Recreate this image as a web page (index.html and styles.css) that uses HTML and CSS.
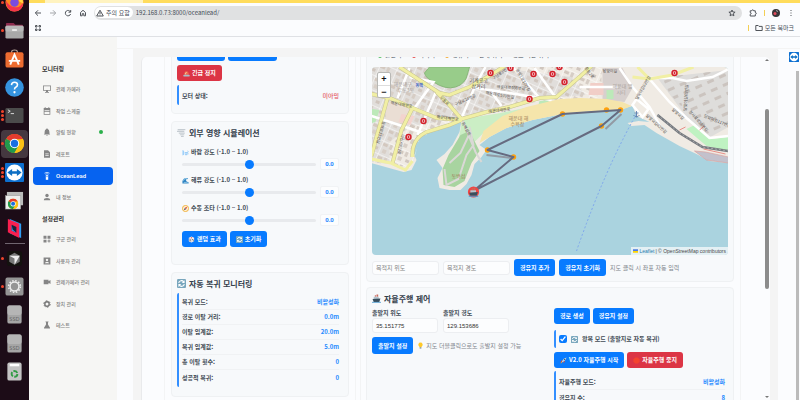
FILE: index.html
```
<!DOCTYPE html>
<html lang="ko">
<head>
<meta charset="utf-8">
<title>OceanLead</title>
<link rel="stylesheet" href="styles.css">
</head>
<body>
<svg class="defs" aria-hidden="true">
  <symbol id="chrome" viewBox="0 0 20 20"><circle cx="10" cy="10" r="10" fill="#fbc116"/><path d="M10 10L1.3 5A10 10 0 0 1 18.7 5z" fill="#e33b2e"/><path d="M1.3 5A10 10 0 0 0 10 20L14.3 12.5 10 10z" fill="#229a4c"/><path d="M10 5.5h9A10 10 0 0 1 10 20l4-7.5z" fill="#fbc116"/><circle cx="10" cy="10" r="5" fill="#fff"/><circle cx="10" cy="10" r="3.9" fill="#1a6fe0"/></symbol>
  <symbol id="viewer" viewBox="0 0 20 20"><rect width="20" height="20" rx="1" fill="#0d6fd0"/><circle cx="10" cy="10" r="8.5" fill="#fff"/><path d="M2.5 10l5-3.8v2.5h5V6.2l5 3.8-5 3.8v-2.5h-5v2.5z" fill="#0d6fc4"/></symbol>
  <symbol id="ssd" viewBox="0 0 16 20"><rect x=".5" y=".5" width="15" height="19" rx="2" fill="#a5a5a5"/><rect x=".5" y=".5" width="15" height="10" rx="2" fill="#b5b5b5"/><text x="8" y="16.5" font-size="6" text-anchor="middle" fill="#666" font-family="Open Sans, sans-serif">SSD</text></symbol>
  <symbol id="refresh" viewBox="0 0 16 16"><rect width="16" height="16" rx="2" fill="#78a6bd"/><path d="M3 7a5 5 0 0 1 9-2M13 9a5 5 0 0 1-9 2" fill="none" stroke="#fff" stroke-width="2"/><path d="M13.5 2v5h-5zM2.500 14V9h5z" fill="#fff"/></symbol>
  <symbol id="siren" viewBox="0 0 16 16"><path d="M3 11V8a5 5 0 0 1 10 0v3z" fill="#f06a50"/><path d="M6 10V7l2-2" stroke="#ffe1a0" stroke-width="2" fill="none"/><rect x="1" y="11" width="14" height="4" rx="1" fill="#a9bdc8"/></symbol>
  <symbol id="tornado" viewBox="0 0 16 16"><path d="M2 3h12M1 6h11M4 9h9M6 12h6M8 15h3" stroke="#c5ccd2" stroke-width="2.200" stroke-linecap="round"/></symbol>
  <symbol id="wind" viewBox="0 0 16 16"><path d="M1 2q5 1 4 5l1 2-1 1v3l-4 2z" fill="#9ed0fa"/><path d="M7 8h6q2-3 0-4M7 11h8M7 13h5" fill="none" stroke="#78bdf5" stroke-width="1.700"/></symbol>
  <symbol id="wave" viewBox="0 0 16 16"><path d="M1 15V9q2-7 9-7 4 0 4 3-4-2-5 2 0 4 6 5v3z" fill="#3186c4"/><path d="M2 9q3-6 9-6M4 13q5-1 10 1" fill="none" stroke="#b8e2f5" stroke-width="1.500"/></symbol>
  <symbol id="compass" viewBox="0 0 16 16"><circle cx="8" cy="8" r="7" fill="#fff2d5" stroke="#efa92b" stroke-width="2"/><path d="M12 4L9.500 9.500 6.500 6.500z" fill="#e54335"/><path d="M4 12l2.500-5.500 3 3z" fill="#556"/></symbol>
  <symbol id="dice" viewBox="0 0 16 16"><path d="M8 1l6 3v8l-6 3-6-3V4z" fill="#f4eeee"/><path d="M2 4l6 3v8l-6-3z" fill="#cfc9cd"/><circle cx="8" cy="4" r="1.400" fill="#d33"/><circle cx="5" cy="9" r="1.200" fill="#333"/><circle cx="11" cy="8" r="1.200" fill="#333"/><circle cx="12" cy="11" r="1.200" fill="#333"/></symbol>
  <symbol id="ship" viewBox="0 0 16 16"><path d="M5 2h2v3H5zM8 1h3v4H8z" fill="#c96a5c"/><path d="M3 5h9v4H3z" fill="#b4c6d1"/><path d="M1 9l14-1-2 6H3z" fill="#394f5e"/><path d="M0 14h16v1.500H0z" fill="#4a9ad0"/></symbol>
  <symbol id="bulb" viewBox="0 0 16 16"><path d="M8 1a5 5 0 0 0-3 9l1 2h4l1-2a5 5 0 0 0-3-9z" fill="#ffc928"/><path d="M6 12h4v3H6z" fill="#7d8c94"/></symbol>
  <symbol id="rocket" viewBox="0 0 16 16"><path d="M3 8h3l-2 4-3 1zM8 10v4l3-3V8z" fill="#d9483c"/><path d="M4 10Q8 2 15 1q-1 7-9 11z" fill="#c8d5dc"/><circle cx="10.500" cy="5.500" r="1.600" fill="#35657c"/><path d="M4 11l-3 4 4-2z" fill="#ffb52a"/></symbol>
  <symbol id="stop" viewBox="0 0 16 16"><path d="M5 1h6l4 4v6l-4 4H5l-4-4V5z" fill="#f4442e"/></symbol>
  <symbol id="cross" viewBox="-4 -4 8 8"><circle r="3.200" fill="#d31f2a"/><circle r="1.700" fill="#fff"/><path d="M-1.300 0h2.600M0-1.300v2.600" stroke="#d31f2a" stroke-width=".9"/></symbol>
</svg>

<div class="desktop">
  <nav class="dock" aria-label="Dock">
    <div class="dock-main">
      <button class="app run" aria-label="Firefox"><svg viewBox="0 0 20 20"><circle cx="10" cy="10" r="9.500" fill="#ff8b22"/><path d="M1 8Q1 19 10 19.500 19 19 19.500 9q-3 7-9 6-6 0-9.500-7z" fill="#f5344d"/><path d="M14 2q5 3 5 9l-4-2z" fill="#ffd53d"/><circle cx="10" cy="10" r="4.500" fill="#7a4ce0"/></svg></button>
      <button class="app run" aria-label="파일"><svg viewBox="0 0 20 20"><path d="M1 3q0-1 1-1h7l2 2h7q1 0 1 1v7H1z" fill="#8e2b4e"/><rect x=".5" y="5" width="19" height="13.500" rx="1.500" fill="#a8a8a8"/><rect x=".5" y="5" width="19" height="6" rx="1.500" fill="#b8b8b8"/><path d="M7.500 9.500h5" stroke="#fff" stroke-width="1.400"/></svg></button>
      <button class="app" aria-label="소프트웨어"><svg viewBox="0 0 20 20"><path d="M7 5V3q0-2 3-2t3 2v2" fill="none" stroke="#b9a79c" stroke-width="1.200"/><rect x=".5" y="3.500" width="19" height="16" rx="2" fill="#ed6c31"/><path d="M5.500 16.500L10 6l4.500 10.500M4 12.500h12" fill="none" stroke="#fff" stroke-width="2"/></svg></button>
      <button class="app" aria-label="도움말"><svg viewBox="0 0 20 20"><circle cx="10" cy="10" r="9.800" fill="#3593df"/><path d="M6.800 7.500Q7 4.500 10 4.500t3.200 2.700Q13.200 9 11 10q-1 .6-1 2.200" fill="none" stroke="#fff" stroke-width="1.600"/><circle cx="10" cy="15" r="1.200" fill="#fff"/></svg></button>
      <button class="app run many" aria-label="터미널"><svg viewBox="0 0 20 20"><rect x=".5" y="2" width="19" height="16" rx="1.500" fill="#4b4b4b"/><path d="M3 4l2.500 1.500L3 7M6 8h3.500" fill="none" stroke="#ddd"/></svg></button>
      <button class="app run active" aria-label="Chrome"><svg viewBox="0 0 20 20"><use href="#chrome"/></svg></button>
      <button class="app run many" aria-label="TeamViewer"><svg viewBox="0 0 20 20"><use href="#viewer"/></svg></button>
      <button class="app" aria-label="Chrome 앱"><svg viewBox="0 0 20 20"><rect x="2" y="1" width="17" height="14" fill="#bbb"/><rect x=".5" y="5" width="16" height="14" fill="#eee" stroke="#999" stroke-width=".5"/><use href="#chrome" x="3" y="8" width="11" height="11"/></svg></button>
      <button class="app" aria-label="Parsec"><svg viewBox="0 0 20 20"><path d="M5 0l12 5v15L5 15z" fill="#2f9df4"/><path d="M3 0l12 5v15L3 14z" fill="#f91f4f"/><path d="M7 6l5 2.500v6L7 12z" fill="#18213a"/><path d="M7 6l1 5 4 3.500L7 12z" fill="#2f9df4"/></svg></button>
    </div>
    <hr>
    <div class="dock-extra">
      <button class="app run" aria-label="Cursor"><svg viewBox="0 0 20 20"><rect x="2" y="2" width="16" height="16" rx="3" fill="#14120f"/><path d="M10 4l5.500 3v6.500L10 16.500l-5.500-3V7z" fill="#777"/><path d="M4.500 7h11L10 16.500V10z" fill="#eee"/></svg></button>
      <button class="app run" aria-label="설정"><svg viewBox="0 0 20 20"><rect x=".5" y=".5" width="19" height="19" rx="2" fill="#959595"/><circle cx="10" cy="10" r="4.700" fill="none" stroke="#eee" stroke-width="1.600"/><circle cx="10" cy="10" r="6.200" fill="none" stroke="#eee" stroke-width="1.600" stroke-dasharray="1.620 1.620"/></svg></button>
      <button class="app" aria-label="SSD 1"><svg viewBox="0 0 16 20"><use href="#ssd"/></svg></button>
      <button class="app" aria-label="SSD 2"><svg viewBox="0 0 16 20"><use href="#ssd"/></svg></button>
      <button class="app" aria-label="휴지통"><svg viewBox="0 0 16 20"><rect x=".5" y=".5" width="15" height="19" rx="2" fill="#c4c4c4"/><path d="M3 2h10v2.500H3z" fill="#fff"/><circle cx="8" cy="12.500" r="3" fill="none" stroke="#329c45" stroke-width="2" stroke-dasharray="4.900 1.380"/></svg></button>
    </div>
  </nav>

  <div class="browser">
    <div class="tabstrip"><span class="tab"></span></div>
    <div class="toolbar">
      <button class="tool" aria-label="뒤로"><svg viewBox="0 0 8 8"><path d="M7 4H1.500M4 1.300L1.300 4 4 6.700"/></svg></button>
      <button class="tool dim" aria-label="앞으로"><svg viewBox="0 0 8 8"><path d="M1 4h5.500M4 1.300L6.700 4 4 6.700"/></svg></button>
      <button class="tool" aria-label="새로고침"><svg viewBox="0 0 8 8"><path d="M6.500 3A2.700 2.700 0 1 0 6.600 5M6.700 1v2.200H4.500"/></svg></button>
      <button class="tool" aria-label="홈"><svg viewBox="0 0 8 8"><path d="M1.500 3.500L4 1.300l2.500 2.200v3.300h-1.700V4.700H3.200v2.100H1.500z"/></svg></button>
      <div class="omnibox">
        <button class="warn"><svg viewBox="0 0 8 8"><path d="M4 1.200L7.300 7H.7zM4 3v2M4 5.600v.7"/></svg>주의 요함</button>
        <label class="url"><input type="text" aria-label="주소" value="192.168.0.73:8000/oceanlead/"></label>
        <button class="tool" aria-label="북마크 추가"><svg viewBox="0 0 8 8"><path d="M4 1l.9 2 2.200.2-1.700 1.400.5 2.200L4 5.700 2.100 6.800l.5-2.200L.9 3.200 3.100 3z"/></svg></button>
      </div>
      <button class="tool" aria-label="확장 프로그램"><svg viewBox="0 0 8 8"><path d="M1.200 1.800h1.500q.2-1 1-1t1 1h1.600v1.700q1 .1 1 .9t-1 .9V7H1.200V5.300q1-.1 1-.9t-1-.9z"/></svg></button>
      <span class="tick"></span>
      <button class="tool" aria-label="프로필"><svg viewBox="0 0 8 8"><circle cx="4" cy="4" r="4" fill="#39363a" stroke="none"/><circle cx="3" cy="4.500" r="1.500" fill="#e24b5c" stroke="none"/><path d="M4 1.500l2 1" stroke="#aaa"/></svg></button>
      <button class="tool" aria-label="메뉴"><svg viewBox="0 0 8 8"><path d="M4 1v1M4 3.500v1M4 6v1"/></svg></button>
    </div>
    <div class="bookmarks">
      <button class="tool" aria-label="앱"><svg viewBox="0 0 8 8"><path d="M1.500 1.500h1.500v1.500H1.500zM5 1.500h1.500v1.500H5zM1.500 5h1.500v1.500H1.500zM5 5h1.500v1.500H5z"/></svg></button>
      <span class="tick push"></span>
      <button class="all"><svg viewBox="0 0 8 8"><path d="M.8 1.500h2.400l.8.900h3.200v4.100H.8z"/></svg>모든 북마크</button>
    </div>

    <div class="app-page">
      <aside class="sidebar">
        <h2>모니터링</h2>
        <ul class="six">
          <li><a href="#"><svg viewBox="0 0 8 8"><path d="M0 .5h8v5.300H5V7h1v.7H2V7h1V5.800H0zm.8.800V5h6.400V1.300z" fill-rule="evenodd"/></svg>관제 카메라</a></li>
          <li><a href="#"><svg viewBox="0 0 8 8"><path d="M.7 1h1V.2h1V1h2.600V.2h1V1h1v6.800H.7zm.8 2v.7h5V3zm0 1.700V7h5V4.700z" fill-rule="evenodd"/></svg>작업 스케줄</a></li>
          <li><a href="#"><svg viewBox="0 0 8 8"><path d="M4 .3q.5 0 .6.700Q6.400 1.500 6.400 4v1.500l.8.900H.8l.8-.9V4Q1.600 1.500 3.400 1q.1-.7.6-.7zM3.200 6.900h1.600q-.1.800-.8.800t-.8-.8z"/></svg>알림 현황<i class="dot"></i></a></li>
          <li><a href="#"><svg viewBox="0 0 8 8"><path d="M1 .3h4l2 2v5.400H1zM2.300 3.500v.7h3.400v-.7zm0 1.700v.7h3.400v-.7z" fill-rule="evenodd"/></svg>레포트</a></li>
          <li><a href="#" class="current"><svg viewBox="0 0 8 8"><path d="M2.800 3.200h2.400v4.600H2.800z"/><path d="M2.500 2.300q1.500-1.200 3 0M1.500 1.200q2.500-1.800 5 0" fill="none" stroke="#fff" stroke-width=".7"/><circle cx="4" cy="4.600" r=".6" fill="#0663f0"/></svg>OceanLead</a></li>
          <li><a href="#"><svg viewBox="0 0 8 8"><circle cx="4" cy="2.500" r="1.700"/><path d="M.8 7.200Q.8 5 4 5t3.200 2.200z"/></svg>내 정보</a></li>
        </ul>
        <h2>설정관리</h2>
        <ul class="five">
          <li><a href="#"><svg viewBox="0 0 8 8"><path d="M.5.800h3v3h-3zM4.500.800h3v3h-3zM.5 4.800h3v2.700h-3zM5.500 4.500h1v1h1v1h-1v1h-1v-1h-1v-1h1z"/></svg>구군 관리</a></li>
          <li><a href="#"><svg viewBox="0 0 8 8"><path d="M.6.600h6.800v6.800H.6zM4 1.700a1.200 1.200 0 1 0 .01 0zM1.800 6.300h4.400Q5.700 4.800 4 4.800T1.800 6.300z" fill-rule="evenodd"/></svg>사용자 관리</a></li>
          <li><a href="#"><svg viewBox="0 0 8 8"><path d="M.7 1.800h4.800v1.500l2-1.300v4l-2-1.300v1.500H.7z"/></svg>관제카메라 관리</a></li>
          <li><a href="#"><svg viewBox="0 0 8 8"><circle cx="4" cy="4" r="2.200" fill="none" stroke="#777" stroke-width="1.400"/><circle cx="4" cy="4" r="3.200" fill="none" stroke="#777" stroke-width="1" stroke-dasharray="1.700 1.650"/></svg>장치 관리</a></li>
          <li><a href="#"><svg viewBox="0 0 8 8"><path d="M2.500.5h3v.8H5v2.200l2 3.200v.8H1v-.8l2-3.200V1.300h-.5z"/></svg>테스트</a></li>
        </ul>
      </aside>

      <div class="workspace">
        <header class="topbar"></header>
        <div class="stage">
          <div class="blank left"></div>
          <div class="frame">
            <main class="panel">
              <div class="content">
                <div class="column">
                  <section class="card motor">
                    <div class="buttons"><button class="btn">모터 아밍 시작</button><button class="btn">모터 아밍 해제</button></div>
                    <div class="buttons"><button class="btn red"><svg><use href="#siren"/></svg>긴급 정지</button></div>
                    <dl class="status one"><div><dt>모터 상태:</dt><dd class="off">미아밍</dd></div></dl>
                  </section>
                  <section class="card sim">
                    <h3><svg><use href="#tornado"/></svg>외부 영향 시뮬레이션</h3>
                    <div class="sliders">
                      <div class="slider"><label for="wind-level"><svg><use href="#wind"/></svg>바람 강도 (-1.0 ~ 1.0)</label><div><input id="wind-level" type="range" min="-1" max="1" step="0.1" value="0"><output>0.0</output></div></div>
                      <div class="slider"><label for="tide-level"><svg><use href="#wave"/></svg>해류 강도 (-1.0 ~ 1.0)</label><div><input id="tide-level" type="range" min="-1" max="1" step="0.1" value="0"><output>0.0</output></div></div>
                      <div class="slider"><label for="helm-level"><svg><use href="#compass"/></svg>수동 조타 (-1.0 ~ 1.0)</label><div><input id="helm-level" type="range" min="-1" max="1" step="0.1" value="0"><output>0.0</output></div></div>
                      <div class="buttons"><button class="btn"><svg><use href="#dice"/></svg>랜덤 효과</button><button class="btn"><svg><use href="#refresh"/></svg>초기화</button></div>
                    </div>
                  </section>
                  <section class="card monitor">
                    <h3><svg><use href="#refresh"/></svg>자동 복귀 모니터링</h3>
                    <dl class="status">
                      <div><dt>복귀 모드:</dt><dd>비활성화</dd></div>
                      <div><dt>경로 이탈 거리:</dt><dd>0.0m</dd></div>
                      <div><dt>이탈 임계값:</dt><dd>20.0m</dd></div>
                      <div><dt>복귀 임계값:</dt><dd>5.0m</dd></div>
                      <div><dt>총 이탈 횟수:</dt><dd>0</dd></div>
                      <div><dt>성공적 복귀:</dt><dd>0</dd></div>
                    </dl>
                  </section>
                </div>

                <div class="column wide">
                  <section class="card map-card">
                    <div class="legend"><span><i class="g"></i>출발지</span><span><i class="r"></i>목적지</span><span><i class="o"></i>경유지</span><span>현재 위치</span><span>경로 이탈 위치</span></div>
                    <div class="map">
                      <svg viewBox="372 67 357 188" preserveAspectRatio="xMidYMid slice" role="img" aria-label="해운대 지도">
                        <defs>
                          <pattern id="blocks" width="17" height="14" patternUnits="userSpaceOnUse" patternTransform="rotate(24)"><rect x="1" y="2" width="5" height="3" fill="#d3c8bf"/><rect x="8" y="1" width="3" height="5" fill="#d6cdc5"/><rect x="3" y="8" width="4" height="4" fill="#d8cfc7"/><rect x="11" y="8" width="4" height="3" fill="#d0c6be"/><path d="M0 0h17M0 0v14" stroke="#fff" stroke-width="1"/></pattern>
                          <pattern id="flats" width="13" height="9" patternUnits="userSpaceOnUse" patternTransform="rotate(-24)"><rect x="2" y="2" width="7" height="3" fill="#cbc4bf"/></pattern>
                          <path id="shore" d="M372 67H729V163L710 161 697 154 680 146 657 133 645 125 632 126 628 123 639 121 650 122 637 116 633 106 622 109 607 109 580 112 563 114 533 120 507 128 490 137 480 145 487 150 482 157 475 164 472 175 467 184 461 190 450 190 440 188 438 178 443 168 437 160 445 154 453 145 460 132 462 120 447 127 428 132 416 139 413 151 417 160 412 170 404 172 372 163Z"/>
                        </defs>
                        <path d="M372 67H729V255H372z" fill="#aad3df"/>
                        <use href="#shore" fill="#f0ebe4"/>
                        <path d="M372 67h120l80 10 14 18-70 6-54 17-50 8-22 16v22l-18-2z" fill="#e1dedb"/>
                        <path d="M372 67h230v31l-95 6-45 16-40 12-10 36-40-6z" fill="url(#blocks)"/>
                        <path d="M603 68h20l10 20-8 14-22-2z" fill="#d7d0ce"/>
                        <path d="M658 78l71-8v57l-18 10-24-20z" fill="#dedddb"/><path d="M655 78l74-8v57l-18 10z" fill="url(#flats)"/>
                        <path d="M387 103l18-3 6 10-7 14-18-4z" fill="#eaded4"/><path d="M402 114l13 2-4 9-12-3z" fill="#f3d3ce"/>
                        <path d="M591 83h13v12h-15z" fill="#f1cec7"/>
                        <path d="M430 67h40l-2 7q-2 10-12 13-10 3-22-5-8-4-9-9z" fill="#98cc8a" stroke="#88b77a"/>
                        <path d="M463 119l38-6 34-7-26 13-25 14-8 8-18 4z" fill="#cbeec5"/>
                        <path d="M372 109l8 1-4 12-4 1zM540 101l10-1-4 7-8 1zM607 90h7v9h-7z" fill="#bce9b9"/>
                        <path d="M461 135l9-4 10 20-8 12-7 18-10 6-11-2-1-16 6-14z" fill="#a8d4a0"/>
                        <path d="M687 129l8-4 17 14 17-2v14l-22-5z" fill="#bff2c2"/>
                        <path d="M480 143l4-12 19-15 24-9 33-8 20-1 27 1 16 3 9 4-10 4-42 2-17 2-30 6-26 8-17 9z" fill="#f5e5ab"/>
                        <path d="M445 169l2 16 12-6 8-24 7-10-4-18M450 163l11-10 8-17M463 120l13 32 6 10" fill="none" stroke="#dad8d6" stroke-width="2"/>
                        <g fill="none" stroke="#fff" stroke-width="2.500"><path d="M410 68l-12 30M372 116l55 18M436 93l-18 42M410 77l24 5-19 26M462 118l15-35 9-16M492 92l10 14M514 68l26 30M535 68l20 28M470 87l40 6 42 7M580 87h38M620 68l13 19 17 20 10 18M650 79l20 23 17 16 23 20 19-2M651 78l22 0 14 3 26-4 16-8M633 105l10 12 6-8-12-10z"/></g>
                        <g fill="none" stroke="#c7c491" stroke-width="4"><path d="M400 67l20 13 20 13 10 2 20-8 23-13 12-8M437 92l11 11 14 16 25-7 23-5 30-9 17-1 23-20 12-11M372 94l18 4 23 10 24 10 25 2-12 5-23 7q-15 7-14 25M388 98l-11 39-5 19M413 108l-11 22-9 33"/></g>
                        <g fill="none" stroke="#f1efa4" stroke-width="3"><path d="M400 67l20 13 20 13 10 2 20-8 23-13 12-8M437 92l11 11 14 16 25-7 23-5 30-9 17-1 23-20 12-11M372 94l18 4 23 10 24 10 25 2-12 5-23 7q-15 7-14 25M388 98l-11 39-5 19M413 108l-11 22-9 33M372 159l19 4 15 7 7-9M633 77l17 2 23-4 21-8M638 67l12 12"/></g>
                        <path d="M658 115l22 18 23 14 26 4" fill="none" stroke="#777b80" stroke-width="2.500"/><path d="M658 115l22 18 23 14 26 4" fill="none" stroke="#a5a8ab" stroke-width="1" stroke-dasharray="2 2"/>
                        <path d="M695 151l11 1 23 5v6l-22-3z" fill="#c3c1cc" stroke="#d9a3a0" stroke-width=".7"/><path d="M680 130l6-3M700 130l5-4M704 149l22 5" stroke="#e88f88"/>
                        <path d="M637 114Q606 168 577 251" fill="none" stroke="#7fa6ec" stroke-width="1" stroke-dasharray="2 2"/>
                        <path d="M637 111v6M635 113h4M634 115q3 4 6 0" fill="none" stroke="#5376a8" stroke-width=".8"/>
                        <g class="road-names">
                          <text transform="translate(391 104) rotate(10)">해운대해변로</text><text transform="translate(437 118) rotate(8)">해운대해변로</text><text transform="translate(489 113) rotate(-7)">해운대해변로</text><text transform="translate(383 121) rotate(106)">동백로27번길</text><text transform="translate(402 134) rotate(102)">마린시티1로</text><text transform="translate(440 98) rotate(42)">우동로</text><text transform="translate(486 94) rotate(10)">해운대로570번길</text><text transform="translate(497 88) rotate(4)">해운대로608번길</text><text transform="translate(456 106) rotate(-25)">구남로24번길</text><text transform="translate(516 70) rotate(60)">중동1로37번길</text><text transform="translate(494 80) rotate(-35)">구남로8번길</text><text transform="translate(585 68) rotate(55)">중동2로</text><text transform="translate(603 72) rotate(2)">달맞이길</text><text transform="translate(638 100) rotate(-60)">달맞이길62번길</text><text transform="translate(646 116) rotate(42)">달맞이길62번길</text><text transform="translate(672 110) rotate(42)">달맞이길</text><text transform="translate(687 111) rotate(-86)">달맞이길65번길</text><text transform="translate(689 112) rotate(48)">청사포로58번길</text><text transform="translate(704 117) rotate(22)">달맞이길117번길</text><text transform="translate(462 123) rotate(62)">동백섬로</text>
                          <text class="faint" x="394" y="86">해운대구</text><text class="faint" x="398" y="92">우동3동</text><text class="blue" x="416" y="87">동백</text><text class="dark" x="470" y="82">기계공고</text><text class="dark" x="472" y="88">삼거리</text><text class="brown" x="509" y="120">해운대 해</text><text class="brown" x="511" y="126">수욕장</text><text class="faint" x="613" y="88">해운대 엘</text><text class="faint" x="617" y="94">시티</text><text class="brown" x="452" y="178">동백섬</text>
                        </g>
                        <path d="M487 155l25 3M606 129l16-15" stroke="#929aa4" stroke-width="2"/>
                        <g fill="#ffa10c"><circle cx="488" cy="150" r="2.700"/><circle cx="514" cy="157" r="2.700"/><circle cx="563" cy="114" r="2.700"/><circle cx="607" cy="110" r="2.700"/><circle cx="621" cy="110" r="2.700"/><circle cx="602" cy="126" r="2.700"/></g>
                        <path d="M474 191l40-34-26-7 75-36 58-4-19 16z" fill="none" stroke="#666b80" stroke-width="2" stroke-linejoin="round"/>
                        <g><use href="#cross" x="487" y="69" width="8" height="8"/><use href="#cross" x="507" y="64" width="8" height="8"/><use href="#cross" x="530" y="70" width="8" height="8"/><use href="#cross" x="549" y="70" width="8" height="8"/><use href="#cross" x="556" y="63" width="8" height="8"/><use href="#cross" x="561" y="78" width="8" height="8"/><use href="#cross" x="526" y="95" width="8" height="8"/><use href="#cross" x="420" y="117" width="8" height="8"/><use href="#cross" x="405" y="133" width="8" height="8"/><use href="#cross" x="671" y="69" width="8" height="8"/></g>
                        <circle cx="474" cy="192" r="5.600" fill="#ef4444"/><use href="#ship" x="469" y="187" width="10" height="10"/>
                      </svg>
                      <div class="zoom"><button aria-label="확대">+</button><button aria-label="축소">−</button></div>
                      <p class="credit"><svg viewBox="0 0 6 4"><path d="M0 0h6v2H0z" fill="#4c7be1"/><path d="M0 2h6v2H0z" fill="#ffd500"/></svg><a href="#">Leaflet</a> | © OpenStreetMap contributors</p>
                    </div>
                    <div class="form-row">
                      <input class="field" type="text" placeholder="목적지 위도" aria-label="목적지 위도"><input class="field" type="text" placeholder="목적지 경도" aria-label="목적지 경도">
                      <button class="btn tall">경유지 추가</button><button class="btn tall">경유지 초기화</button><span class="hint">지도 클릭 시 좌표 자동 입력</span>
                    </div>
                  </section>
                  <section class="card drive">
                    <h3><svg><use href="#ship"/></svg>자율주행 제어</h3>
                    <div class="halves">
                      <div>
                        <div class="pair"><label>출발지 위도<input class="field" type="text" value="35.151775"></label><label>출발지 경도<input class="field" type="text" value="129.153686"></label></div>
                        <div class="start"><button class="btn tall">출발지 설정</button><span class="hint"><svg><use href="#bulb"/></svg>지도 더블클릭으로도 출발지 설정 가능</span></div>
                      </div>
                      <div>
                        <div class="buttons"><button class="btn">경로 생성</button><button class="btn">경유지 설정</button></div>
                        <label class="round"><input type="checkbox" checked><svg><use href="#refresh"/></svg>왕복 모드 (출발지로 자동 복귀)</label>
                        <div class="buttons"><button class="btn"><svg><use href="#rocket"/></svg>V2.0 자율주행 시작</button><button class="btn red"><svg><use href="#stop"/></svg>자율주행 중지</button></div>
                        <dl class="status drive-status"><div><dt>자율주행 모드:</dt><dd>비활성화</dd></div><div><dt>경유지 수:</dt><dd>8</dd></div></dl>
                      </div>
                    </div>
                  </section>
                </div>
              </div>
              <span class="thumb"></span><span class="arrow up"></span><span class="arrow down"></span>
            </main>
          </div>
          <div class="blank right"><svg class="remote" viewBox="0 0 20 20"><use href="#viewer"/></svg><span class="page-thumb"></span></div>
        </div>
      </div>
    </div>
  </div>
</div>
</body>
</html>
```
FILE: styles.css
```
* { box-sizing: border-box; }
body { margin: 0; color: #414a54; font: 6px/10px "Noto Sans CJK KR", "Noto Sans", sans-serif; }
button, input { margin: 0; padding: 0; border: 0; background: none; color: inherit; font: inherit; }
h2, h3, ul, dl, dd, p { margin: 0; padding: 0; }
ul { list-style: none; }
a { color: inherit; text-decoration: none; }
svg { display: block; flex: none; }
.defs { position: absolute; width: 0; height: 0; }
.desktop { display: flex; height: 100vh; overflow: hidden; }

/* Dock */
.dock { flex: none; width: 29px; background: #1c0c17; overflow: hidden; }
.dock-main, .dock-extra { display: grid; grid-auto-rows: 1fr; }
.dock-main { height: 255px; margin-top: -12px; }
.dock-extra { height: 142px; }
.dock hr { width: 20px; height: 1px; margin: 0 auto; border: 0; background: #706570; }
.app { position: relative; display: grid; place-items: center; width: 27px; margin: 0 1px; border-radius: 4px; }
.app svg { width: 19px; height: 19px; }
.app.active { background: #453840; }
.run::before { content: ""; position: absolute; left: 0; width: 3px; height: 3px; border-radius: 50%; background: #f0452b; }
.many::before { box-shadow: 0 -4px #f0452b, 0 4px #f0452b; }

/* Browser chrome */
.browser { flex: 1; min-width: 0; display: flex; flex-direction: column; background: #fbfcfe; }
.tabstrip { height: 3px; flex: none; background: #ffdc5c; }
.tab { display: block; width: 98px; height: 3px; margin-left: 16px; background: #fff3c0; }
.toolbar { display: flex; align-items: center; flex: none; height: 19px; gap: 7px; padding: 0 5px; }
.tool { width: 8px; height: 8px; }
.tool svg, .warn svg, .all svg { width: 8px; height: 8px; fill: none; stroke: #50545a; stroke-width: 1; }
.dim { opacity: .5; }
.omnibox { flex: 1; display: flex; align-items: center; height: 14px; padding: 0 6px 0 1px; border-radius: 7px; background: #e0e1e2; }
.warn { display: flex; align-items: center; gap: 2px; height: 11px; padding: 0 3px 0 1px; border-radius: 6px; background: #fff; }
.url { flex: 1; padding-left: 3px; }
.url input { display: block; width: 100%; }
.tick { width: 1px; height: 6px; background: #f3cf55; }
.bookmarks { display: flex; align-items: center; flex: none; gap: 6px; height: 15px; padding: 0 6px 2px 5px; border-bottom: 1px solid #dfe1e5; }
.push { margin-left: auto; }
.all { display: flex; align-items: center; gap: 2px; }

/* Sidebar */
.app-page { display: flex; flex: 1; min-height: 0; }
.sidebar { flex: none; width: 88px; padding: 27px 4px 0; background: #f6f6f4; color: #858585; font-size: 5px; font-weight: 500; }
.sidebar h2 { padding-left: 9px; font-size: 6px; line-height: 10px; color: #333; }
.sidebar ul { display: grid; grid-auto-rows: 1fr; margin-bottom: 6px; }
.six { height: 134px; padding-top: 4px; }
.five { height: 112px; padding-top: 4px; }
.sidebar a { position: relative; display: flex; align-items: center; gap: 5px; height: 18px; margin-top: 2px; padding-left: 10px; border-radius: 4px; }
.sidebar svg { width: 8px; height: 8px; fill: #858585; }
.sidebar .current { background: #0663f0; color: #fff; font-size: 6px; font-family: Roboto, sans-serif; }
.sidebar .current svg { fill: #fff; }
.dot { width: 4px; height: 4px; margin: 0 10px 0 auto; border-radius: 50%; background: #2bb04a; }

/* Page frame */
.workspace { flex: 1; min-width: 0; display: flex; flex-direction: column; background: #f4f4f4; }
.topbar { flex: none; height: 11px; background: #fbfcfe; }
.stage { flex: 1; min-height: 0; display: flex; }
.blank { flex: none; margin-top: 1px; background: #fbfcfe; }
.left { width: 16px; }
.right { position: relative; width: 22px; }
.remote { position: absolute; top: 3px; right: 1px; width: 10px; height: 10px; }
.page-thumb { position: absolute; top: 22px; right: 1px; bottom: 0; width: 3px; background: #bbb; }
.frame { flex: 1; min-width: 0; display: flex; padding: 9px 8px 0; }
.panel { position: relative; flex: 1; min-width: 0; overflow: hidden; border-radius: 5px 5px 0 0; border-left: 1px solid #e9eaec; background: #fbfcfe; }
.thumb { position: absolute; top: 52px; right: 1px; width: 4px; height: 180px; border-radius: 2px; background: #8c8c8c; }
.arrow { position: absolute; right: 1px; border: 2px solid transparent; }
.up { top: 0; border-bottom-color: #777; }
.down { bottom: 0; border-top-color: #777; }
.content { display: grid; grid-template-columns: 192px 1fr; gap: 4px; margin-top: -18px; padding: 0 29px 0 22px; }
.column { padding: 0 6px; border: solid #f3f4f5; border-width: 0 1px; }
.wide { padding-left: 5px; }

/* Cards */
.card { margin-bottom: 6px; padding: 5px; border: 1px solid #eff1f3; border-radius: 4px; background: #f7f9fb; }
.card h3 { display: flex; align-items: center; gap: 3px; font-size: 8px; line-height: 11px; color: #34404c; }
.card h3 svg { width: 9px; height: 9px; }
.motor { margin-bottom: 7px; padding-bottom: 8px; }
.sim { margin-bottom: 7px; padding-bottom: 17px; }
.monitor { padding-bottom: 9px; }
.map-card { margin-bottom: 5px; }
.buttons { display: flex; gap: 3px; }
.motor .buttons { margin-bottom: 4px; }
.btn { display: flex; align-items: center; justify-content: center; gap: 2px; height: 16px; padding: 0 6px; border-radius: 3px; background: #087bff; color: #fff; font-weight: 700; white-space: nowrap; }
.btn svg, .slider svg, .hint svg, .round svg { width: 7px; height: 7px; }
.red { background: #dc3545; }
.tall { height: 17px; }
.status { margin-top: 4px; padding: 2px 4px 2px 3px; border-left: 2px solid #338fff; border-radius: 2px; }
.status div { display: flex; align-items: center; justify-content: space-between; height: 15px; border-bottom: 1px solid #f0f2f4; }
.status div:last-child { border: 0; }
.status dt { font-weight: 700; }
.status dd { color: #288bff; font-weight: 700; }
.status .off { color: #e45460; font-weight: 500; }
.one { margin-top: 0; padding-block: 3px 2px; }
.sliders { margin-top: 9px; padding: 0 4px 0 5px; }
.slider { height: 28px; }
.slider label { display: flex; align-items: center; gap: 2px; font-weight: 700; }
.slider div { display: flex; align-items: center; gap: 4px; height: 14px; }
.slider input { flex: 1; min-width: 0; height: 9px; appearance: none; }
.slider input::-webkit-slider-runnable-track { height: 3px; border-radius: 2px; background: #e8eaed; }
.slider input::-webkit-slider-thumb { appearance: none; width: 9px; height: 9px; margin-top: -3px; border-radius: 50%; background: #087bff; }
.slider output { width: 19px; height: 12px; border: 1px solid #f1f3f5; border-radius: 2px; background: #fcfdfe; color: #288bff; font: 700 6px/10px "Noto Sans", sans-serif; text-align: center; }

/* Map */
.legend { display: flex; gap: 10px; height: 22px; padding-left: 6px; line-height: 20px; }
.legend span { display: flex; align-items: center; gap: 3px; height: 20px; }
.legend i { width: 4px; height: 5px; border-radius: 50%; }
.g { background: #5ec26c; }
.r { background: #e65555; }
.o { background: #f5ad3d; }
.map { position: relative; height: 188px; overflow: hidden; border-radius: 4px; }
.map > svg { width: 100%; height: 100%; }
.road-names text { font: 4px "Noto Sans CJK KR", sans-serif; fill: #55524f; }
.road-names .faint { font-size: 5px; fill: #a7a19b; }
.road-names .blue { fill: #466cc9; font-weight: 700; }
.road-names .dark { font-size: 5px; }
.road-names .brown { font-size: 5px; fill: #a08258; }
.zoom { position: absolute; top: 5px; left: 5px; border: 1px solid #b8b8b5; border-radius: 2px; background: #fff; }
.zoom button { display: block; width: 12px; height: 12px; color: #111; font: 700 9px/12px "Liberation Sans", sans-serif; }
.zoom button + button { border-top: 1px solid #ddd; }
.credit { position: absolute; right: 0; bottom: 0; display: flex; align-items: center; gap: 1px; height: 8px; padding: 0 2px; background: #e4f0f4; color: #4b4b4b; font: 5px/8px "Liberation Sans", sans-serif; }
.credit svg { width: 5px; height: 4px; }
.credit a { color: #287cae; }

/* Forms */
.form-row { display: flex; align-items: center; gap: 4px; margin-top: 4px; }
.field { display: block; width: 66px; height: 14px; padding: 0 3px; border: 1px solid #eceef1; border-radius: 3px; background: #fcfdfe; }
.form-row .field { width: 67px; }
.field::placeholder { color: #858585; }
.hint { display: flex; align-items: center; gap: 2px; color: #7f858c; white-space: nowrap; }
.halves { display: grid; grid-template-columns: 1fr 1fr; gap: 8px; margin-top: 4px; }
.pair { display: flex; gap: 5px; font-weight: 700; }
.pair .field { height: 15px; color: #333; font: 6px "Liberation Sans", sans-serif; }
.start { display: flex; align-items: center; gap: 4px; margin-top: 4px; }
.round { display: flex; align-items: center; gap: 4px; height: 18px; margin: 6px 0 4px; padding-left: 3px; border-left: 2px solid #338fff; border-radius: 2px; font-weight: 700; }
.round input { width: 8px; height: 8px; accent-color: #087bff; }
.drive-status { margin-top: 3px; padding: 4px 3px 15px; }
```
